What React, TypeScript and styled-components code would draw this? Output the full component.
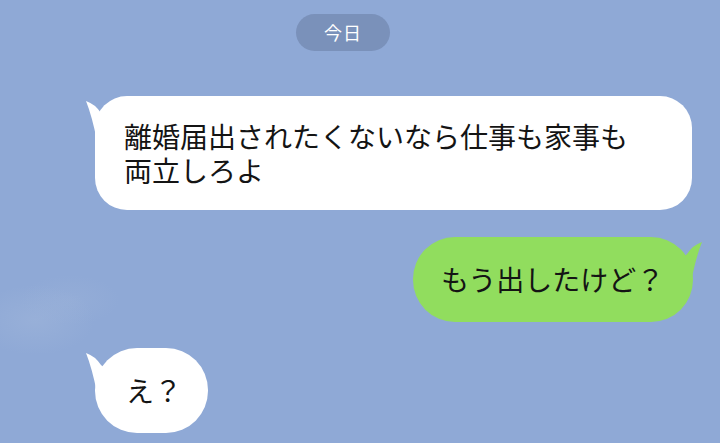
import React from 'react';
import styled, { createGlobalStyle } from 'styled-components';

const GlobalStyle = createGlobalStyle`
  html, body {
    margin: 0;
    padding: 0;
  }
  body {
    width: 720px;
    height: 443px;
    overflow: hidden;
    background: #8fa9d6;
    font-family: 'Noto Sans CJK JP', 'Noto Sans', sans-serif;
  }
`;

const Screen = styled.div`
  position: relative;
  width: 720px;
  height: 443px;
  overflow: hidden;
  box-sizing: border-box;
  padding-top: 14px;
  display: flex;
  flex-direction: column;
  background:
    radial-gradient(ellipse 60px 35px at 35px 320px, rgba(165, 186, 220, 0.4), transparent),
    radial-gradient(ellipse 50px 25px at 70px 300px, rgba(160, 182, 218, 0.3), transparent),
    #8fa9d6;
`;

const DateRow = styled.div`
  display: flex;
  padding-left: 296px;
`;

const DatePill = styled.div`
  width: 94px;
  height: 37px;
  border-radius: 19px;
  background: #7a91ba;
  color: #fff;
  font-size: 18px;
  line-height: 37px;
  text-align: center;
  letter-spacing: 1px;
`;

const Row = styled.div<{ $indent: number; $gap: number }>`
  display: flex;
  padding-left: ${p => p.$indent}px;
  margin-top: ${p => p.$gap}px;
`;

const Bubble = styled.div<{ $width: number; $mine?: boolean; $padX: number }>`
  position: relative;
  width: ${p => p.$width}px;
  box-sizing: border-box;
  padding: 25px ${p => p.$padX}px;
  border-radius: 42px;
  background: ${p => (p.$mine ? '#91dd5e' : '#ffffff')};
  color: #141414;
  font-size: 28px;
  line-height: 35px;
  white-space: nowrap;
`;

const WideBubble = styled(Bubble)`
  padding-top: 23px;
  padding-bottom: 23px;
  line-height: 34px;
  border-radius: 32px;
  white-space: normal;
`;

// fixed measure so the long message wraps right after 家事も
const WrapText = styled.p`
  margin: 0;
  width: 512px;
`;

const Tail = styled.svg<{ $mine?: boolean }>`
  position: absolute;
  top: 0;
  width: 30px;
  height: 46px;
  ${p => (p.$mine ? 'right: -12px; transform: scaleX(-1);' : 'left: -12px;')}
`;

// horn-shaped tail that grows out of the rounded top corner
const BubbleTail: React.FC<{ mine?: boolean }> = ({ mine }) => (
  <Tail $mine={mine} viewBox="0 0 30 46">
    <path
      d="M3 5 Q12 8 18 17 L28 26 L14 45 Q9 20 3 5 Z"
      fill={mine ? '#91dd5e' : '#ffffff'}
    />
  </Tail>
);

export default function App() {
  return (
    <>
      <GlobalStyle />
      <Screen>
        <DateRow>
          <DatePill>今日</DatePill>
        </DateRow>

        <Row $indent={95} $gap={45}>
          <WideBubble $width={597} $padX={29}>
            <BubbleTail />
            <WrapText>離婚届出されたくないなら仕事も家事も両立しろよ</WrapText>
          </WideBubble>
        </Row>

        <Row $indent={413} $gap={27}>
          <Bubble $width={280} $padX={28} $mine>
            <BubbleTail mine />
            もう出したけど？
          </Bubble>
        </Row>

        <Row $indent={95} $gap={26}>
          <Bubble $width={113} $padX={31}>
            <BubbleTail />
            え？
          </Bubble>
        </Row>
      </Screen>
    </>
  );
}
